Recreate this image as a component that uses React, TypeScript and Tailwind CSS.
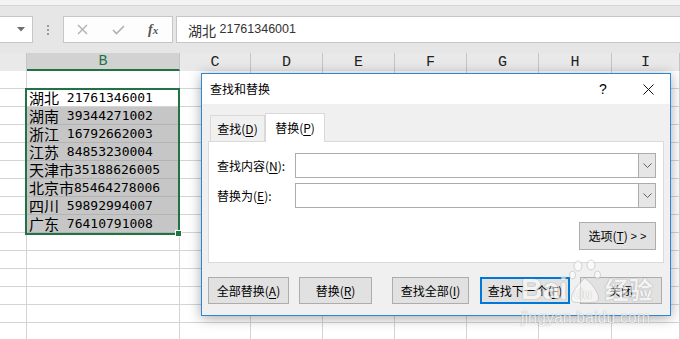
import React from 'react';

const data: [string, string][] = [
  ['湖北', '21761346001'],
  ['湖南', '39344271002'],
  ['浙江', '16792662003'],
  ['江苏', '84853230004'],
  ['天津市', '35188626005'],
  ['北京市', '85464278006'],
  ['四川', '59892994007'],
  ['广东', '76410791008'],
];

const colWidths = ['w-[71px]', 'w-[72px]', 'w-[72px]', 'w-[72px]', 'w-[72px]', 'w-[73px]', 'flex-1'];
const letters = ['C', 'D', 'E', 'F', 'G', 'H', 'I'];

const SheetRow = ({ i }: { i: number }) => {
  const d = i >= 1 && i <= 8 ? data[i - 1] : null;
  const sel = i >= 2 && i <= 8;
  return (
    <div className="flex h-[18px] shrink-0">
      <div className="w-[27px] border-r border-b border-[#d4d4d4] bg-white" />
      <div
        className={`w-[153px] border-r border-b flex items-center pl-[2px] whitespace-pre ${
          sel ? 'bg-[#c6c6c6] border-[#b4b4b4]' : 'bg-white border-[#d4d4d4]'
        }`}
      >
        {d && (
          <>
            <span className="font-['Noto_Sans_CJK_SC',sans-serif] text-[15px] leading-[17px] text-black">{d[0]}</span>
            <span className="font-['DejaVu_Sans_Mono',monospace] text-[13px] leading-[17px] text-black">
              {d[0].length === 2 ? ' ' : ''}
              {d[1]}
            </span>
          </>
        )}
      </div>
      {colWidths.map((w, k) => (
        <div key={k} className={`${w} border-r border-b border-[#d4d4d4] bg-white`} />
      ))}
    </div>
  );
};

const U = ({ c }: { c: string }) => <span className="underline underline-offset-2">{c}</span>;

const Btn = ({ w, focus, children }: { w: string; focus?: boolean; children: React.ReactNode }) => (
  <div
    className={`${w} h-[27px] flex items-center justify-center bg-[#e1e1e1] text-[12px] text-black ${
      focus ? 'border-2 border-[#0078d7]' : 'border border-[#adadad]'
    }`}
  >
    {children}
  </div>
);

const ComboInput = () => (
  <div className="flex-1 h-[25px] border border-[#acacac] bg-white flex justify-end">
    <div className="w-[17px] h-full bg-[#e6e6e6] border-l border-[#acacac] flex items-center justify-center">
      <svg width="9" height="5" viewBox="0 0 9 5">
        <polyline points="0.5,0.5 4.5,4.5 8.5,0.5" fill="none" stroke="#606060" strokeWidth="1" />
      </svg>
    </div>
  </div>
);

export default function App() {
  return (
    <div className="relative w-[680px] h-[339px] overflow-hidden bg-white flex flex-col font-['Noto_Sans_CJK_SC',sans-serif]">
      {/* ribbon edge */}
      <div className="h-[6px] shrink-0 bg-[#f3f3f3] border-b border-[#d5d5d5]" />

      {/* formula bar */}
      <div className="h-[47px] shrink-0 bg-[#e6e6e6] flex items-start pt-[10px]">
        <div className="w-[33px] h-[27px] bg-white border-y border-r border-[#c6c6c6] flex items-center justify-end pr-[7px]">
          <svg width="8" height="5" viewBox="0 0 8 5">
            <polygon points="0,0 8,0 4,4.5" fill="#6e6e6e" />
          </svg>
        </div>
        <div className="w-[30px] h-[27px] flex flex-col items-center justify-center gap-[2px]">
          <span className="w-[2px] h-[2px] bg-[#9a9a9a]" />
          <span className="w-[2px] h-[2px] bg-[#9a9a9a]" />
          <span className="w-[2px] h-[2px] bg-[#9a9a9a]" />
        </div>
        <div className="w-[110px] h-[27px] bg-[#fdfdfd] border border-[#c6c6c6] flex items-center">
          <svg className="ml-[13px]" width="11" height="11" viewBox="0 0 11 11">
            <path d="M1 1 L10 10 M10 1 L1 10" stroke="#b0b0b0" strokeWidth="1.4" />
          </svg>
          <svg className="ml-[24px]" width="13" height="10" viewBox="0 0 13 10">
            <path d="M1 5 L4.5 8.5 L12 1" fill="none" stroke="#b0b0b0" strokeWidth="1.6" />
          </svg>
          <span className="ml-[23px] font-['Liberation_Serif',serif] italic font-bold text-[14px] text-[#555] leading-none">
            f<span className="text-[11px]">x</span>
          </span>
        </div>
        <div className="ml-[3px] flex-1 h-[27px] bg-white border-y border-l border-[#c6c6c6] flex items-center pl-[11px] text-[#333] whitespace-pre">
          <span className="text-[14px] leading-none">湖北</span>
          <span className="font-['Liberation_Sans',sans-serif] text-[12.5px] leading-none"> 21761346001</span>
        </div>
      </div>

      {/* column headers */}
      <div className="h-[18px] shrink-0 flex bg-[#e9e9e9] font-['Liberation_Mono',monospace] text-[15px] leading-none text-[#222]">
        <div className="w-[27px] border-r border-[#c5c5c5]" />
        <div className="w-[153px] bg-[#d2d2d2] border-b-2 border-[#217346] border-r border-r-[#c5c5c5] flex items-center justify-center text-[#217346]">
          B
        </div>
        {letters.map((l, k) => (
          <div key={l} className={`${colWidths[k]} border-r border-[#c5c5c5] flex items-center justify-center`}>
            {l}
          </div>
        ))}
      </div>

      {/* grid */}
      <div className="flex flex-col">
        {Array.from({ length: 15 }, (_, i) => (
          <SheetRow key={i} i={i} />
        ))}
      </div>

      {/* selection outline */}
      <div className="absolute left-[25px] top-[88px] w-[155px] h-[147px] border-2 border-[#217346]" />
      <div className="absolute left-[175px] top-[230px] w-[7px] h-[7px] bg-[#217346] border border-white" />

      {/* dialog */}
      <div className="absolute left-[201px] top-[73px] w-[470px] h-[243px] border border-[#2b88d8] bg-[#f0f0f0] flex flex-col shadow-[0_2px_12px_rgba(0,0,0,0.35)]">
        <div className="h-[30px] shrink-0 bg-white flex items-center pl-[8px] text-[12px] text-black">
          <span className="flex-1">查找和替换</span>
          <span className="w-[20px] text-center text-[14px] mr-[13px] font-['Liberation_Sans',sans-serif]">?</span>
          <div className="w-[44px] flex items-center justify-center">
            <svg width="11" height="11" viewBox="0 0 11 11">
              <path d="M0.5 0.5 L10.5 10.5 M10.5 0.5 L0.5 10.5" stroke="#111" strokeWidth="1" />
            </svg>
          </div>
        </div>

        <div className="flex-1 flex flex-col px-[6px] pt-[9px] text-[12px] text-black">
          {/* tabs */}
          <div className="flex items-end h-[28px] pl-[2px]">
            <div className="w-[55px] h-[26px] border-x border-t border-[#d9d9d9] flex items-center justify-center">
              查找(<U c="D" />)
            </div>
            <div className="relative z-10 -mb-px w-[60px] h-[29px] bg-white border-x border-t border-[#d9d9d9] flex items-center justify-center pb-px">
              替换(<U c="P" />)
            </div>
          </div>

          {/* panel */}
          <div className="h-[122px] bg-white border border-[#d9d9d9] pt-[11px] pl-[8px] pr-[7px] flex flex-col">
            <div className="flex items-center h-[25px]">
              <span className="w-[78px]">
                查找内容(<U c="N" />):
              </span>
              <ComboInput />
            </div>
            <div className="flex items-center h-[25px] mt-[5px]">
              <span className="w-[78px]">
                替换为(<U c="E" />):
              </span>
              <ComboInput />
            </div>
            <div className="flex justify-end mt-[14px]">
              <div className="w-[77px] h-[28px] bg-[#e1e1e1] border border-[#adadad] flex items-center justify-center whitespace-pre">
                选项(<U c="T" />) <span className="font-['Liberation_Sans',sans-serif] text-[11px]">{'> >'}</span>
              </div>
            </div>
          </div>

          {/* buttons */}
          <div className="flex mt-[14px]">
            <Btn w="w-[81px]">
              全部替换(<U c="A" />)
            </Btn>
            <div className="ml-[10px]">
              <Btn w="w-[73px]">
                替换(<U c="R" />)
              </Btn>
            </div>
            <div className="ml-[20px]">
              <Btn w="w-[77px]">
                查找全部(<U c="I" />)
              </Btn>
            </div>
            <div className="ml-[11px]">
              <Btn w="w-[90px]" focus>
                查找下一个(<U c="F" />)
              </Btn>
            </div>
            <div className="ml-[10px]">
              <Btn w="w-[82px]">关闭</Btn>
            </div>
          </div>
        </div>
      </div>

      {/* watermark */}
      <div className="absolute left-[521px] top-[258px] opacity-60 pointer-events-none">
        <div className="flex items-end">
          <span className="font-['Liberation_Sans',sans-serif] font-bold text-[30px] leading-[30px] text-white [text-shadow:0_0_1px_#888,0_0_1px_#888]">
            Bai
          </span>
          <div className="relative w-[32px] h-[46px] ml-[1px]">
            <svg width="32" height="46" viewBox="0 0 32 46">
              <g fill="#ffffff" stroke="#bdbdbd" strokeWidth="1">
                <ellipse cx="9" cy="8" rx="4" ry="5" />
                <ellipse cx="22" cy="7" rx="4" ry="5" />
                <ellipse cx="3.5" cy="17" rx="3" ry="4" />
                <ellipse cx="28.5" cy="17" rx="3" ry="4" />
                <path d="M5 44 C-1 42 4 30 16 20 C28 30 33 42 27 44 C21 45 11 45 5 44 Z" />
              </g>
            </svg>
            <span className="absolute left-[5px] bottom-[3px] font-['Liberation_Sans',sans-serif] font-bold text-[15px] leading-none text-white [text-shadow:0_0_1px_#888]">
              du
            </span>
          </div>
          <span className="ml-[4px] font-['Noto_Sans_CJK_SC',sans-serif] font-bold text-[24px] leading-[30px] text-white [text-shadow:0_0_1px_#888,0_0_1px_#888]">
            经验
          </span>
        </div>
        <div className="font-['Liberation_Sans',sans-serif] text-[16px] leading-none text-white [text-shadow:0_0_1px_#888,0_0_1px_#888] mt-[6px]">
          jingyan.baidu.com
        </div>
      </div>
    </div>
  );
}
